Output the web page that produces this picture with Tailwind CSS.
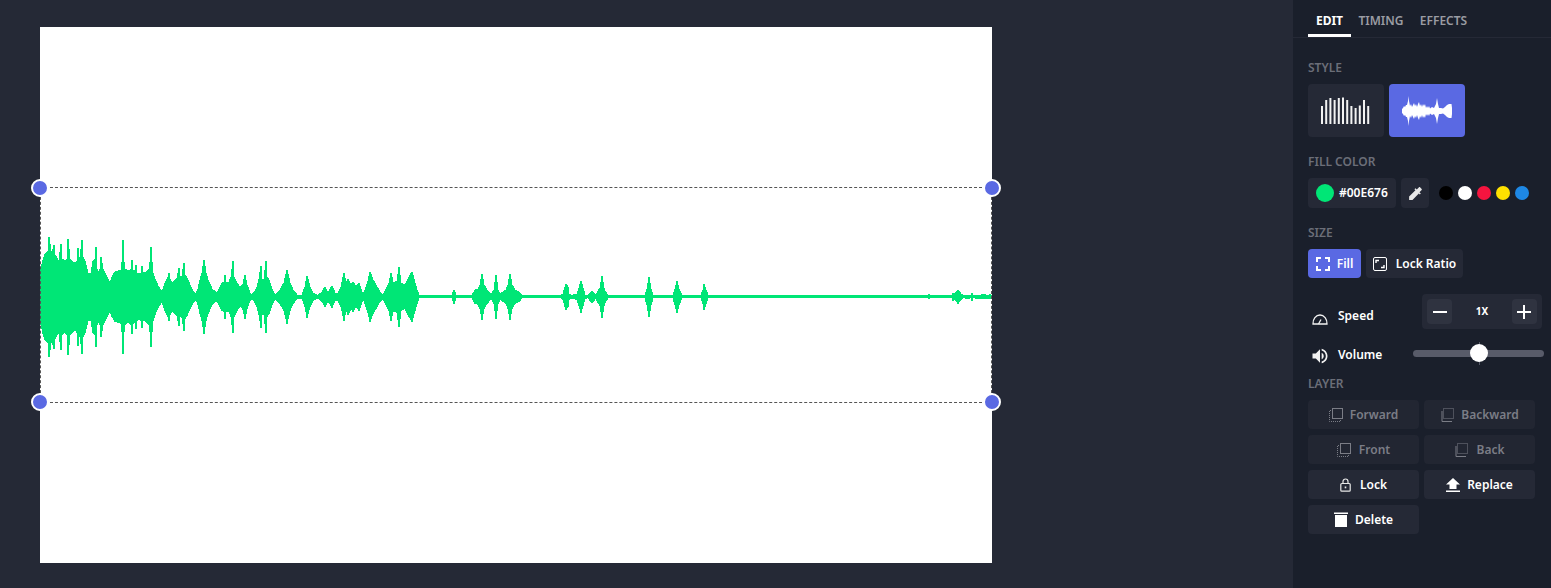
<!DOCTYPE html>
<html lang="en">
<head>
  <meta charset="UTF-8">
  <title>Audio waveform editor</title>
  <script src="https://cdn.jsdelivr.net/npm/@tailwindcss/browser@4"></script>
</head>
<body class="bg-[#252936] font-['Noto_Sans',sans-serif] overflow-hidden">
  <div class="flex h-[588px] w-[1551px]">
    <!-- Canvas -->
    <main class="flex-1 pl-[40px] pt-[27px]">
      <div class="relative w-[952px] h-[536px] bg-white">
        <svg class="absolute left-0 top-[160px]" width="952" height="216" viewBox="40 187 952 216" shape-rendering="crispEdges">
          <polygon id="wave" fill="#00e676" points=""></polygon>
        </svg>
        <!-- Selection box -->
        <div class="absolute left-0 top-[160px] w-[952px] h-[216px] border border-dashed border-[#555]"></div>
        <span class="absolute left-[-9px] top-[152px] w-[18px] h-[18px] rounded-full bg-[#5a69e3] border-2 border-white"></span>
        <span class="absolute left-[943px] top-[152px] w-[18px] h-[18px] rounded-full bg-[#5a69e3] border-2 border-white"></span>
        <span class="absolute left-[-9px] top-[366px] w-[18px] h-[18px] rounded-full bg-[#5a69e3] border-2 border-white"></span>
        <span class="absolute left-[943px] top-[366px] w-[18px] h-[18px] rounded-full bg-[#5a69e3] border-2 border-white"></span>
      </div>
    </main>

    <!-- Side panel -->
    <aside class="w-[258px] h-full bg-[#1a1f2b] text-xs font-semibold text-white">
      <nav class="flex h-[38px] pl-[15px] border-b border-[#252936]">
        <span class="w-[43px] h-[37px] pt-[13px] text-center font-bold border-b-[3px] border-white">EDIT</span>
        <span class="w-[60px] pt-[13px] text-center text-[#9a9ca3]">TIMING</span>
        <span class="w-[65px] pt-[13px] text-center text-[#9a9ca3]">EFFECTS</span>
      </nav>

      <div class="px-[15px]">
        <h3 class="mt-[22px] h-[16px] leading-[16px] text-[#6b6e78]">STYLE</h3>
        <div class="flex gap-[5px] mt-[8px]">
          <button class="w-[76px] h-[53px] rounded-sm bg-[#252936] flex items-center justify-center">
            <svg width="50" height="27" viewBox="0 0 50 27" fill="#f2f2f2">
              <rect x="0" y="9" width="2" height="18"/><rect x="4.2" y="3" width="2" height="24"/><rect x="8.4" y="1" width="2" height="26"/><rect x="12.6" y="3" width="2" height="24"/><rect x="16.8" y="1" width="2" height="26"/><rect x="21" y="0.5" width="2" height="26.5"/><rect x="25.2" y="3" width="2" height="24"/><rect x="29.4" y="9" width="2" height="18"/><rect x="33.6" y="11" width="2" height="16"/><rect x="37.8" y="8.5" width="2" height="18.5"/><rect x="42" y="3" width="2" height="24"/><rect x="46.2" y="9" width="2" height="18"/>
            </svg>
          </button>
          <button class="w-[76px] h-[53px] rounded-sm bg-[#5a69e3] flex items-center justify-center">
            <svg width="50" height="32" viewBox="0 0 50 32" fill="#fff">
              <polygon id="style-wave" points=""></polygon>
            </svg>
          </button>
        </div>

        <h3 class="mt-[17px] h-[16px] leading-[16px] text-[#6b6e78]">FILL COLOR</h3>
        <div class="flex items-center mt-[8px]">
          <div class="w-[88px] h-[30px] rounded-sm bg-[#252936] flex items-center pl-[8px] gap-[5px]">
            <span class="w-[18px] h-[18px] rounded-full bg-[#00e676]"></span>
            <span>#00E676</span>
          </div>
          <button class="ml-[5px] w-[28px] h-[30px] rounded-sm bg-[#252936] flex items-center justify-center">
            <svg width="17" height="17" viewBox="0 0 24 24" fill="#e8e8e8"><path d="M20.71 5.63l-2.34-2.34c-.39-.39-1.02-.39-1.41 0l-3.12 3.12-1.93-1.91-1.41 1.41 1.42 1.42L3 16.25V21h4.75l8.92-8.92 1.42 1.42 1.41-1.41-1.92-1.92 3.12-3.12c.4-.4.4-1.03.01-1.42z"/></svg>
          </button>
          <div class="flex gap-[5px] ml-[10px]">
            <span class="w-[14px] h-[14px] rounded-full bg-black"></span>
            <span class="w-[14px] h-[14px] rounded-full bg-white"></span>
            <span class="w-[14px] h-[14px] rounded-full bg-[#f5143f]"></span>
            <span class="w-[14px] h-[14px] rounded-full bg-[#ffe100]"></span>
            <span class="w-[14px] h-[14px] rounded-full bg-[#1e88e5]"></span>
          </div>
        </div>

        <h3 class="mt-[17px] h-[16px] leading-[16px] text-[#6b6e78]">SIZE</h3>
        <div class="flex gap-[5px] mt-[8px]">
          <button class="w-[53px] h-[29px] rounded-sm bg-[#5a69e3] flex items-center justify-center gap-[7px]">
            <svg width="14" height="14" viewBox="0 0 14 14" fill="none" stroke="#fff" stroke-width="2"><path d="M1 5V1h4M9 1h4v4M13 9v4H9M5 13H1V9"/></svg>
            <span>Fill</span>
          </button>
          <button class="w-[97px] h-[29px] rounded-sm bg-[#252936] flex items-center justify-center gap-[9px]">
            <svg width="14" height="14" viewBox="0 0 14 14" fill="none" stroke="#fff"><rect x="0.5" y="0.5" width="13" height="13" rx="1.5"/><path stroke-width="1.4" d="M3 6V3.5h3M11 8v2.5H8"/></svg>
            <span>Lock Ratio</span>
          </button>
        </div>
      </div>

      <!-- Speed / volume -->
      <div class="flex items-center mt-[16px] pl-[19px] h-[35px]">
        <svg class="mt-[15px]" width="16" height="11" viewBox="0 0 16 11" fill="none" stroke="#f2f2f2" stroke-width="1.3"><path d="M1 10C.7 5 4 1 8 1s7.300 4 7 9z"/><path d="M6.500 10L9 5.500"/></svg>
        <span class="ml-[10px] w-[84px] mt-[8px]">Speed</span>
        <div class="w-[120px] h-[35px] rounded-sm bg-[#252936] flex items-center justify-between px-[5px]">
          <button class="w-[25px] h-[25px] rounded-sm bg-[#2f3340] flex items-center justify-center">
            <svg width="14" height="14" viewBox="0 0 14 14"><rect y="6" width="14" height="2" fill="#fff"/></svg>
          </button>
          <span class="text-[10px] font-bold">1X</span>
          <button class="w-[25px] h-[25px] rounded-sm bg-[#2f3340] flex items-center justify-center">
            <svg width="14" height="14" viewBox="0 0 14 14" fill="#fff"><rect y="6" width="14" height="2"/><rect x="6" width="2" height="14"/></svg>
          </button>
        </div>
      </div>
      <div class="flex items-center mt-[14px] pl-[17px] h-[22px]">
        <svg class="mt-[3px]" width="20" height="20" viewBox="0 0 24 24" fill="#f2f2f2"><path d="M3 9v6h4l5 5V4L7 9H3zm13.500 3A4.500 4.500 0 0 0 14 7.970v8.050c1.480-.73 2.500-2.250 2.500-4.020zM14 3.230v2.060c2.890.86 5 3.540 5 6.710s-2.110 5.850-5 6.710v2.060c4.010-.91 7-4.490 7-8.770s-2.990-7.860-7-8.770z"/></svg>
        <span class="ml-[8px] w-[75px] mt-[2px]">Volume</span>
        <div class="relative w-[131px] h-[7px] rounded-full bg-[#585b69] -mt-[2px]">
          <span class="absolute left-[66px] top-[-8px] w-[1px] h-[23px] bg-[#585b69]"></span>
          <span class="absolute left-[57px] top-[-6px] w-[18px] h-[18px] rounded-full bg-white"></span>
        </div>
      </div>

      <div class="px-[15px]">
        <h3 class="mt-[11px] h-[16px] leading-[16px] text-[#6b6e78]">LAYER</h3>
        <div class="grid grid-cols-[111px_111px] gap-x-[5px] gap-y-[6px] mt-[8px]">
          <button class="h-[29px] rounded-sm bg-[#222632] text-[#7b7d86] flex items-center justify-center gap-[7px]">
            <svg width="14" height="14" viewBox="0 0 14 14" fill="none" stroke="#7b7d86"><rect x="3.500" y="0.500" width="10" height="10"/><path stroke-dasharray="1 1" d="M2 2.500H.5v11h11V12"/></svg>
            <span>Forward</span>
          </button>
          <button class="h-[29px] rounded-sm bg-[#222632] text-[#7b7d86] flex items-center justify-center gap-[7px]">
            <svg width="14" height="14" viewBox="0 0 14 14" fill="none" stroke="#7b7d86"><rect x="3.500" y="0.500" width="10" height="10" stroke-dasharray="1 1"/><path d="M2 3v10.500h10"/></svg>
            <span>Backward</span>
          </button>
          <button class="h-[29px] rounded-sm bg-[#222632] text-[#7b7d86] flex items-center justify-center gap-[8px]">
            <svg width="14" height="14" viewBox="0 0 14 14" fill="none" stroke="#7b7d86"><rect x="3.500" y="0.500" width="10" height="10"/><path stroke-dasharray="1 1" d="M2 2.500H.5v11h11V12"/></svg>
            <span>Front</span>
          </button>
          <button class="h-[29px] rounded-sm bg-[#222632] text-[#7b7d86] flex items-center justify-center gap-[8px]">
            <svg width="14" height="14" viewBox="0 0 14 14" fill="none" stroke="#7b7d86"><rect x="3.500" y="0.500" width="10" height="10" stroke-dasharray="1 1"/><path d="M2 3v10.500h10"/></svg>
            <span>Back</span>
          </button>
          <button class="h-[29px] rounded-sm bg-[#252936] flex items-center justify-center gap-[9px]">
            <svg width="11" height="14" viewBox="0 0 11 14" fill="none" stroke="#e8e8e8" stroke-width="1.200"><rect x="0.800" y="5.500" width="9.400" height="7.700" rx="1"/><path d="M3 5.500V3.500a2.500 2.500 0 0 1 5 0v2"/><rect x="4.700" y="8.500" width="1.600" height="1.800" fill="#e8e8e8" stroke="none"/></svg>
            <span>Lock</span>
          </button>
          <button class="h-[29px] rounded-sm bg-[#252936] flex items-center justify-center gap-[7px]">
            <svg width="14" height="14" viewBox="0 0 14 14" fill="#fff"><path d="M7 0l7 6.500h-3.500V11h-7V6.500H0z"/><rect y="12.500" width="14" height="1.500"/></svg>
            <span>Replace</span>
          </button>
          <button class="h-[29px] rounded-sm bg-[#252936] flex items-center justify-center gap-[7px]">
            <svg width="14" height="15" viewBox="0 0 14 15" fill="#fff"><rect x="0" y="0.500" width="14" height="1.500"/><rect x="1" y="3" width="12" height="12"/></svg>
            <span>Delete</span>
          </button>
        </div>
      </div>
    </aside>
  </div>

  <script>
    // [x, half height] of the waveform envelope, mirrored round y=296.5
    var peaks = [[40,22],[41,28],[43,37],[45,43],[48,46],[49,60],[51,46],[52,44],[54,52],[55,42],[58,37],[59,37],[61,53],[62,38],[65,36],[67,38],[68,58],[70,38],[73,35],[76,34],[77,36],[78,49],[79,40],[80,38],[82,57],[83,40],[85,36],[88,24],[91,24],[93,36],[95,38],[96,50],[97,28],[98,24],[100,28],[101,40],[103,28],[105,24],[108,18],[110,14],[112,20],[115,25],[118,26],[121,27],[122,35],[123,57],[124,35],[125,28],[128,26],[130,27],[131,28],[132,37],[133,27],[135,26],[136,32],[137,24],[139,23],[141,24],[142,31],[143,24],[146,25],[149,28],[150,35],[151,50],[152,35],[153,24],[155,18],[158,11],[162,5],[165,14],[168,20],[169,24],[170,18],[172,14],[175,17],[177,19],[179,29],[180,20],[182,21],[184,34],[185,22],[187,19],[190,12],[193,6],[196,3],[198,8],[200,17],[202,24],[204,37],[206,24],[208,17],[212,8],[217,4],[220,10],[222,14],[224,15],[225,22],[226,15],[229,15],[231,20],[233,36],[234,20],[237,14],[239,11],[241,10],[243,13],[245,22],[247,12],[250,4],[252,2],[255,6],[257,10],[259,18],[261,31],[262,18],[264,18],[266,36],[267,20],[269,17],[272,8],[275,2],[280,7],[284,14],[287,27],[290,14],[293,7],[297,2],[302,2],[305,10],[307,21],[310,10],[313,4],[318,1.5],[322,5],[325,10],[328,4],[332,11],[335,4],[338,4],[341,10],[344,24],[346,13],[348,18],[351,12],[353,15],[356,10],[359,14],[361,8],[363,2],[365,7],[368,16],[370,25],[373,17],[377,10],[380,5],[383,2],[387,10],[389,14],[391,24],[393,15],[395,15],[397,16],[399,30],[401,14],[405,12],[408,18],[412,25],[415,14],[417,7],[419,1.5],[452,1.5],[454,7],[456,1.5],[472,1.5],[475,7],[478,8],[480,12],[482,23],[484,12],[487,7],[491,2],[494,7],[496,22],[498,7],[500,3],[506,7],[508,12],[510,23],[512,12],[515,7],[519,5],[522,1.5],[561,1.5],[563,3],[565,10],[566,13],[568,10],[569,3],[571,1.5],[577,3],[579,9],[581,16],[583,9],[585,2],[588,1.5],[592,6],[596,1.5],[598,6],[600,9],[602,21],[604,9],[605,6],[608,1.5],[645,1.5],[647,8],[649,20],[651,8],[653,1.5],[673,1.5],[675,8],[677,16],[679,8],[682,1.5],[701,1.5],[703,7],[704,13],[706,7],[708,1.5],[928,1.5],[929,2.500],[930,1.5],[952,1.5],[953,4],[955,3],[958,7],[961,3],[963,1.5],[968,2],[971,1.5],[972,4],[973,1.5],[985,2.500],[987,1.5],[990,2.500],[992,1.5]];

    function ampAt(x) {
      for (var i = 1; i < peaks.length; i++) {
        if (x <= peaks[i][0]) {
          var a = peaks[i - 1], b = peaks[i];
          return a[1] + (b[1] - a[1]) * (x - a[0]) / (b[0] - a[0]);
        }
      }
      return 1.5;
    }

    // one step per pixel column, taking the column's taller edge so one-pixel spikes survive
    var upper = [], lower = [];
    for (var x = 40; x < 992; x++) {
      var amp = Math.round(Math.max(ampAt(x), ampAt(x + 1)) * 2) / 2;
      upper.push(x + ',' + (296.5 - amp), (x + 1) + ',' + (296.5 - amp));
      lower.unshift((x + 1) + ',' + (296.5 + amp), x + ',' + (296.5 + amp));
    }
    document.getElementById('wave').setAttribute('points', upper.concat(lower).join(' '));

    var iconPeaks = [[0,2],[1,3],[2,5],[3,4],[4,6],[5,6],[6,10],[6.500,15],[7,10],[8,5],[9,7],[10,4],[11,6],[12,8],[13,5],[14,7],[15,4],[16,7],[17,9],[18,5],[19,7],[20,4],[21,7],[22,5],[23,7],[24,3],[25,5],[26,3],[27,5],[28,2.500],[30,4],[32,3],[33,5],[34,7],[35,13],[36,7],[37,3],[39,3],[41,2.500],[43,4],[45,6],[47,7],[49.500,7],[50,3]];
    var iconTop = iconPeaks.map(function (p) { return p[0] + ',' + (16 - p[1]); });
    var iconBottom = iconPeaks.slice().reverse().map(function (p) { return p[0] + ',' + (16 + p[1]); });
    document.getElementById('style-wave').setAttribute('points', iconTop.concat(iconBottom).join(' '));
  </script>
</body>
</html>
